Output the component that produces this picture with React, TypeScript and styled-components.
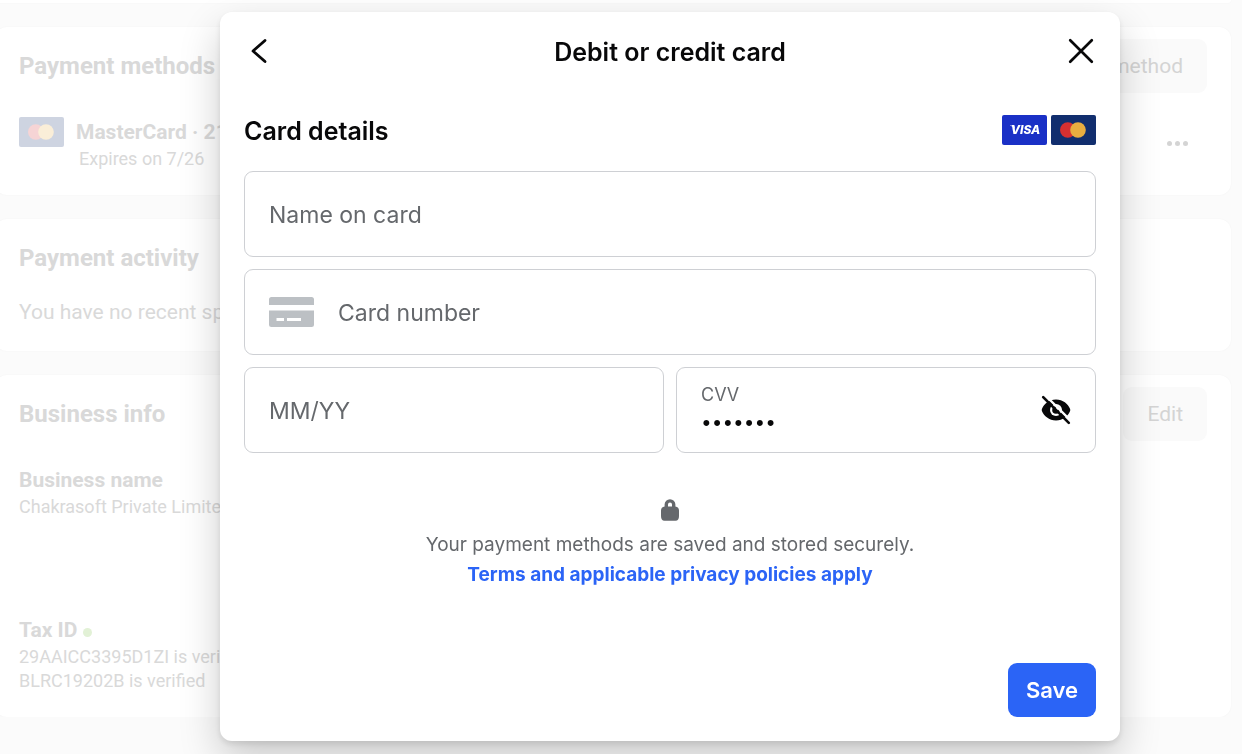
import React from "react";
import styled, { createGlobalStyle } from "styled-components";

const GlobalStyle = createGlobalStyle`
  *, *::before, *::after { box-sizing: border-box; }
  body {
    margin: 0;
    background: #fbfbfb;
    overflow: hidden;
    font-family: Roboto, "Liberation Sans", sans-serif;
  }
  h1, h2, h3, p { margin: 0; }
  button, input { font: inherit; }
`;

/* ---------- Billing page behind the dialog ---------- */

const Page = styled.main`
  display: flex;
  flex-direction: column;
  gap: 24px;
  margin: 0 11px 0 -5px;
  color: #d9d9d9;
`;

const Card = styled.section`
  padding: 12px 24px;
  border-radius: 12px;
  background: #ffffff;
  box-shadow: 0 0 2px rgba(0, 0, 0, 0.04);
`;

const CardSliver = styled.div`
  height: 3px;
  border-radius: 0 0 12px 12px;
  background: #ffffff;
  box-shadow: 0 0 2px rgba(0, 0, 0, 0.04);
`;

const CardHeader = styled.div`
  display: flex;
  align-items: center;
  justify-content: space-between;
  height: 54px;
`;

const CardTitle = styled.h2`
  font-size: 24px;
  line-height: 30px;
  font-weight: 700;
`;

const GhostButton = styled.button`
  height: 54px;
  padding: 0 24px;
  border: 0;
  border-radius: 9px;
  background: #fafafa;
  color: #d4d4d4;
  font-size: 21px;
`;

const MethodRow = styled.div`
  display: flex;
  align-items: flex-start;
  gap: 12px;
  padding: 24px 0 12px;
`;

const MethodText = styled.div`
  flex: 1;
`;

const ItemTitle = styled.h3`
  display: flex;
  align-items: center;
  gap: 6px;
  font-size: 21px;
  line-height: 30px;
  font-weight: 700;
`;

const ItemText = styled.p`
  font-size: 18px;
  line-height: 24px;
`;

const Expiry = styled(ItemText)`
  padding-left: 3px;
`;

const FadedLogo = styled.div`
  height: 30px;
  opacity: 0.2;
`;

const MoreButton = styled.button`
  display: flex;
  gap: 3px;
  margin: 22px 19px 0 0;
  padding: 2px 0;
  border: 0;
  background: none;
`;

const MoreDot = styled.span`
  width: 5px;
  height: 5px;
  border-radius: 50%;
  background: #d4d4d4;
`;

const EmptyText = styled.p`
  font-size: 21px;
  line-height: 54px;
`;

const InfoBlock = styled.div`
  height: 126px;
  margin-top: 24px;

  &:last-child {
    height: 90px;
  }
`;

const StatusDot = styled.span`
  width: 9px;
  height: 9px;
  margin-top: 4px;
  border-radius: 50%;
  background: #e2f1d6;
`;

/* ---------- Dialog ---------- */

const Overlay = styled.div`
  position: fixed;
  inset: 0;
  display: flex;
  align-items: flex-start;
  justify-content: center;
  padding: 12px 0 0 98px;
`;

const Dialog = styled.div`
  display: flex;
  flex-direction: column;
  width: 100%;
  max-width: 900px;
  padding: 12px 24px 24px;
  border-radius: 12px;
  background: #ffffff;
  color: #080809;
  font-family: Inter, "Liberation Sans", sans-serif;
  box-shadow: 0 18px 42px rgba(0, 0, 0, 0.2), 0 3px 6px rgba(0, 0, 0, 0.1);
`;

const DialogHeader = styled.header`
  display: grid;
  grid-template-columns: 30px 1fr 30px;
  align-items: center;
  height: 54px;
`;

const Title = styled.h2`
  padding-top: 2px;
  text-align: center;
  font-size: 25px;
  line-height: 30px;
  font-weight: 600;
`;

const IconButton = styled.button`
  display: flex;
  width: 30px;
  height: 30px;
  padding: 0;
  border: 0;
  background: none;
  color: inherit;
`;

const SectionHeader = styled.div`
  display: flex;
  align-items: center;
  justify-content: space-between;
  height: 30px;
  margin: 37px 0 26px;
`;

const Brands = styled.div`
  display: flex;
  gap: 4px;
`;

const Form = styled.form`
  display: flex;
  flex-direction: column;
`;

const Fields = styled.div`
  display: grid;
  grid-template-columns: 1fr 1fr;
  gap: 12px;
`;

const Field = styled.div<{ $wide?: boolean }>`
  display: flex;
  align-items: center;
  gap: 24px;
  grid-column: ${(p) => (p.$wide ? "1 / -1" : "auto")};
  height: 86px;
  padding: 0 24px;
  border: 1px solid #ced0d4;
  border-radius: 9px;
`;

const FieldInput = styled.input`
  flex: 1;
  width: 100%;
  min-width: 0;
  padding: 2px 0 0;
  border: 0;
  outline: 0;
  background: none;
  color: #080809;
  font-size: 23px;
  line-height: 30px;

  &::placeholder {
    color: #65686c;
    opacity: 1;
  }
`;

const SecretInput = styled(FieldInput)`
  flex: none;
  height: 30px;
  font-size: 19px;
`;

const Stack = styled.div`
  flex: 1;
  display: flex;
  flex-direction: column;
`;

const FloatingLabel = styled.label`
  color: #65686c;
  font-size: 18px;
  line-height: 24px;
`;

const Notice = styled.div`
  display: flex;
  flex-direction: column;
  align-items: center;
  margin-top: 45px;
  color: #65686c;
  font-size: 19px;
  line-height: 30px;
`;

const LockBox = styled.span`
  display: flex;
  height: 32px;
`;

const TermsLink = styled.a`
  color: #2b64f6;
  font-weight: 700;
  text-decoration: none;
`;

const SaveButton = styled.button`
  align-self: flex-end;
  height: 54px;
  margin-top: 73px;
  padding: 0 18px;
  border: 0;
  border-radius: 9px;
  background: #2b64f6;
  color: #ffffff;
  font-size: 22px;
  font-weight: 600;
`;

/* ---------- Icons ---------- */

const MastercardLogo = () => (
  <svg width="45" height="30" viewBox="0 0 45 30" role="img" aria-label="Mastercard">
    <rect width="45" height="30" rx="2" fill="#112e6e" />
    <circle cx="16.8" cy="15" r="7.8" fill="#d63031" />
    <circle cx="27" cy="15" r="7.8" fill="#e8ae40" />
  </svg>
);

const VisaLogo = () => (
  <svg width="45" height="30" viewBox="0 0 45 30" role="img" aria-label="Visa">
    <rect width="45" height="30" rx="2" fill="#1a30c6" />
    <path d="M8 10.600h4.200l.8 3.200c-1-1.600-2.600-2.600-5-3z" fill="#ffffff" />
    <text
      x="23.500"
      y="19.400"
      textAnchor="middle"
      fontFamily="Inter, sans-serif"
      fontSize="12"
      fontWeight="800"
      fontStyle="italic"
      fill="#ffffff"
    >
      VISA
    </text>
  </svg>
);

const BackIcon = () => (
  <svg width="30" height="30" viewBox="0 0 30 30" fill="none" aria-hidden="true">
    <path
      d="M21 4.500L9 15L21 25.500"
      stroke="currentColor"
      strokeWidth="2.900"
      strokeLinecap="round"
      strokeLinejoin="round"
    />
  </svg>
);

const CloseIcon = () => (
  <svg width="30" height="30" viewBox="0 0 30 30" fill="none" aria-hidden="true">
    <path
      d="M4.200 4.200L25.800 25.800M25.800 4.200L4.200 25.800"
      stroke="currentColor"
      strokeWidth="2.700"
      strokeLinecap="round"
    />
  </svg>
);

const CardIcon = () => (
  <svg width="45" height="30" viewBox="0 0 45 30" fill="#bcc0c4" aria-hidden="true">
    <path d="M2.500 0h40a2.500 2.500 0 0 1 2.500 2.500V8H0V2.500A2.500 2.500 0 0 1 2.500 0z" />
    <path
      fillRule="evenodd"
      d="M0 13.500h45v14a2.500 2.500 0 0 1-2.500 2.500h-40A2.500 2.500 0 0 1 0 27.500zM7.500 21v3H15v-3zM18 21v3h14v-3z"
    />
  </svg>
);

const EyeOffIcon = () => (
  <svg width="30" height="30" viewBox="0 0 30 30" aria-hidden="true">
    <path
      d="M15 4.500C22 4.500 27 9 29 13.700Q29.600 15 29 16.300C27 21 22 25.500 15 25.500S3 21 1 16.300Q.4 15 1 13.700C3 9 8 4.500 15 4.500z"
      fill="currentColor"
    />
    <circle cx="15" cy="15" r="6" fill="#ffffff" />
    <circle cx="15" cy="15" r="3.800" fill="currentColor" />
    <circle cx="16" cy="13.600" r="1.600" fill="#ffffff" />
    <path d="M4.500 .5L30 26" stroke="#ffffff" strokeWidth="2.400" />
    <path
      d="M2.200 2.200L27.800 27.800"
      stroke="currentColor"
      strokeWidth="2.600"
      strokeLinecap="round"
    />
  </svg>
);

const LockIcon = () => (
  <svg width="20" height="24" viewBox="0 0 20 24" fill="currentColor" aria-hidden="true">
    <path
      fillRule="evenodd"
      d="M4.600 8.500V6.600a5.400 5.400 0 0 1 10.800 0V8.500A4.200 4.200 0 0 1 19 12.600v5.400Q19 22.800 15.500 22.800H4.500Q1 22.800 1 18v-5.400A4.200 4.200 0 0 1 4.600 8.500zM8 8.500h4V6.600a2 2 0 0 0-4 0z"
    />
  </svg>
);

/* ---------- Screen ---------- */

const BillingPage = () => (
  <Page>
    <CardSliver />
    <Card>
      <CardHeader>
        <CardTitle>Payment methods</CardTitle>
        <GhostButton type="button">Add payment method</GhostButton>
      </CardHeader>
      <MethodRow>
        <FadedLogo>
          <MastercardLogo />
        </FadedLogo>
        <MethodText>
          <ItemTitle>MasterCard · 21</ItemTitle>
          <Expiry>Expires on 7/26</Expiry>
        </MethodText>
        <MoreButton type="button" aria-label="More options">
          <MoreDot />
          <MoreDot />
          <MoreDot />
        </MoreButton>
      </MethodRow>
    </Card>
    <Card>
      <CardHeader>
        <CardTitle>Payment activity</CardTitle>
      </CardHeader>
      <EmptyText>You have no recent spend</EmptyText>
    </Card>
    <Card>
      <CardHeader>
        <CardTitle>Business info</CardTitle>
        <GhostButton type="button">Edit</GhostButton>
      </CardHeader>
      <InfoBlock>
        <ItemTitle>Business name</ItemTitle>
        <ItemText>Chakrasoft Private Limited</ItemText>
      </InfoBlock>
      <InfoBlock>
        <ItemTitle>
          Tax ID <StatusDot />
        </ItemTitle>
        <ItemText>29AAICC3395D1ZI is verified</ItemText>
        <ItemText>BLRC19202B is verified</ItemText>
      </InfoBlock>
    </Card>
  </Page>
);

const CardDialog = () => (
  <Dialog role="dialog" aria-modal="true" aria-labelledby="dialog-title">
    <DialogHeader>
      <IconButton type="button" aria-label="Back">
        <BackIcon />
      </IconButton>
      <Title as="h1" id="dialog-title">
        Debit or credit card
      </Title>
      <IconButton type="button" aria-label="Close">
        <CloseIcon />
      </IconButton>
    </DialogHeader>
    <SectionHeader>
      <Title>Card details</Title>
      <Brands>
        <VisaLogo />
        <MastercardLogo />
      </Brands>
    </SectionHeader>
    <Form onSubmit={(e) => e.preventDefault()}>
      <Fields>
        <Field $wide>
          <FieldInput aria-label="Name on card" placeholder="Name on card" />
        </Field>
        <Field $wide>
          <CardIcon />
          <FieldInput aria-label="Card number" placeholder="Card number" inputMode="numeric" />
        </Field>
        <Field>
          <FieldInput aria-label="Expiration date" placeholder="MM/YY" inputMode="numeric" />
        </Field>
        <Field>
          <Stack>
            <FloatingLabel htmlFor="cvv">CVV</FloatingLabel>
            <SecretInput id="cvv" type="password" defaultValue="1234567" />
          </Stack>
          <IconButton type="button" aria-label="Show CVV">
            <EyeOffIcon />
          </IconButton>
        </Field>
      </Fields>
      <Notice>
        <LockBox>
          <LockIcon />
        </LockBox>
        <p>Your payment methods are saved and stored securely.</p>
        <TermsLink href="#terms">Terms and applicable privacy policies apply</TermsLink>
      </Notice>
      <SaveButton type="submit">Save</SaveButton>
    </Form>
  </Dialog>
);

export default function App() {
  return (
    <>
      <GlobalStyle />
      <BillingPage />
      <Overlay>
        <CardDialog />
      </Overlay>
    </>
  );
}
